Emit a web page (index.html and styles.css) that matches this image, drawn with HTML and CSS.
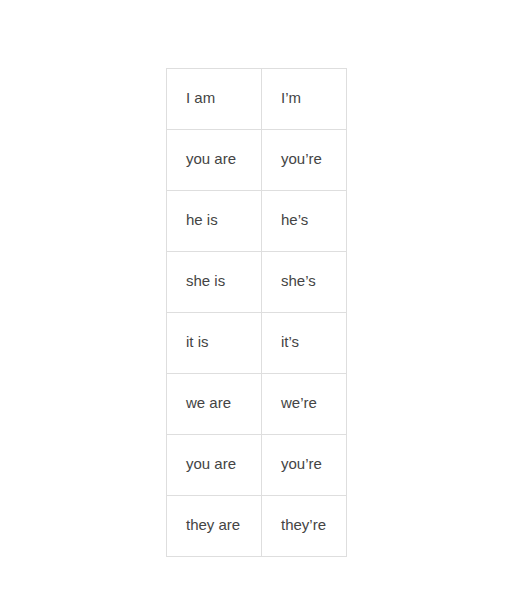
FILE: index.html
```html
<!DOCTYPE html>
<html>
<head>
<meta charset="utf-8">
<link rel="stylesheet" href="styles.css">
</head>
<body>
<table class="contractions">
  <tr><td class="c1">I am</td><td class="c2">I’m</td></tr>
  <tr><td class="c1">you are</td><td class="c2">you’re</td></tr>
  <tr><td class="c1">he is</td><td class="c2">he’s</td></tr>
  <tr><td class="c1">she is</td><td class="c2">she’s</td></tr>
  <tr><td class="c1">it is</td><td class="c2">it’s</td></tr>
  <tr><td class="c1">we are</td><td class="c2">we’re</td></tr>
  <tr><td class="c1">you are</td><td class="c2">you’re</td></tr>
  <tr><td class="c1">they are</td><td class="c2">they’re</td></tr>
</table>
</body>
</html>
```
FILE: styles.css
```css
html, body {
  margin: 0;
  padding: 0;
  background: #ffffff;
}
body {
  font-family: "Liberation Sans", Arial, sans-serif;
  font-size: 15px;
  color: #444444;
}
.contractions {
  border-collapse: separate;
  border-spacing: 0;
  border-top: 1px solid #dedede;
  border-left: 1px solid #dedede;
  margin: 68px 0 0 166px;
}
.contractions td {
  box-sizing: border-box;
  height: 61px;
  padding: 0 19px 3px;
  border-right: 1px solid #dedede;
  border-bottom: 1px solid #dedede;
  vertical-align: middle;
  white-space: nowrap;
}
.contractions .c1 { width: 95px; }
.contractions .c2 { width: 85px; }
```
